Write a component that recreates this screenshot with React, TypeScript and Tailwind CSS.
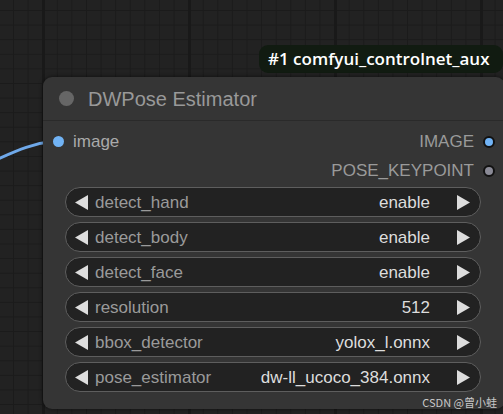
import React from "react";

type Widget = { label: string; value: string };

const widgets: Widget[] = [
  { label: "detect_hand", value: "enable" },
  { label: "detect_body", value: "enable" },
  { label: "detect_face", value: "enable" },
  { label: "resolution", value: "512" },
  { label: "bbox_detector", value: "yolox_l.onnx" },
  { label: "pose_estimator", value: "dw-ll_ucoco_384.onnx" },
];

function Arrow({ dir }: { dir: "left" | "right" }) {
  return (
    <svg width="13" height="15" viewBox="0 0 13 15" className="shrink-0">
      {dir === "left" ? (
        <polygon points="13,0 13,15 0,7.5" fill="#dddddd" />
      ) : (
        <polygon points="0,0 0,15 13,7.5" fill="#dddddd" />
      )}
    </svg>
  );
}

function ComboWidget({ label, value }: Widget) {
  return (
    <div className="flex h-[30px] items-center rounded-full border border-[#5e5e5e] bg-[#222222] pl-[9px] pr-[10px] text-[17px] leading-none">
      <Arrow dir="left" />
      <span className="ml-[7px] text-[#9a9a9a]">{label}</span>
      <span className="ml-auto mr-[27px] text-[#dddddd]">{value}</span>
      <Arrow dir="right" />
    </div>
  );
}

export default function App() {
  return (
    <div className="relative h-[414px] w-[503px] overflow-hidden bg-[#222222] font-['Liberation_Sans',Arial,sans-serif] [background-image:linear-gradient(to_right,#191919_3px,transparent_3px),linear-gradient(to_right,#1b1b1b_1px,transparent_1px),linear-gradient(to_bottom,#1b1b1b_1px,transparent_1px)] [background-position:42px_0,13px_0,0_10px] [background-size:146px_100%,14.6px_14.6px,14.6px_14.6px]">
      {/* link wire coming in from the left */}
      <svg className="absolute left-0 top-0" width="60" height="170">
        <path d="M-2 159 C 18 150, 34 143, 56 141" stroke="#6fa9ea" strokeWidth="3" fill="none" />
      </svg>

      {/* group badge */}
      <div className="absolute left-[259px] top-[45px] flex h-[28px] w-[244px] items-center rounded-[9px] bg-[#111b11] pl-[9px] font-['Open_Sans',sans-serif] text-[17px] font-semibold text-white">
        #1 comfyui_controlnet_aux
      </div>

      {/* node */}
      <div className="absolute left-[43px] top-[77px] w-[462px] rounded-[9px] bg-[#353535] shadow-[0_0_4px_rgba(0,0,0,0.6)]">
        <div className="flex h-[44px] items-center border-b border-[#2a2a2a] pl-[16px]">
          <span className="h-[15px] w-[15px] rounded-full bg-[#666666]" />
          <span className="ml-[14px] text-[20px] text-[#999999]">DWPose Estimator</span>
        </div>

        <div className="pb-[17px] pt-[6px] text-[17px] leading-none">
          <div className="flex h-[29px] items-center">
            <span className="ml-[10px] h-[11px] w-[11px] rounded-full bg-[#71b3f5]" />
            <span className="ml-[9px] text-[#aaaaaa]">image</span>
            <span className="ml-auto text-[#9a9a9a]">IMAGE</span>
            <span className="ml-[9px] mr-[10px] h-[12px] w-[12px] rounded-full border-2 border-[#111111] bg-[#71b3f5]" />
          </div>
          <div className="flex h-[29px] items-center">
            <span className="ml-auto text-[#9a9a9a]">POSE_KEYPOINT</span>
            <span className="ml-[9px] mr-[10px] h-[12px] w-[12px] rounded-full border-2 border-[#111111] bg-[#8a8a96]" />
          </div>

          <div className="ml-[22px] mr-[24px] mt-[2px] flex flex-col gap-[5px]">
            {widgets.map((w) => (
              <ComboWidget key={w.label} {...w} />
            ))}
          </div>
        </div>
      </div>

      <div className="absolute bottom-[6px] right-[6px] font-['Noto_Sans_CJK_SC',sans-serif] text-[11px] leading-none text-[#c8c8c8]">
        CSDN @曾小蛙
      </div>
    </div>
  );
}
